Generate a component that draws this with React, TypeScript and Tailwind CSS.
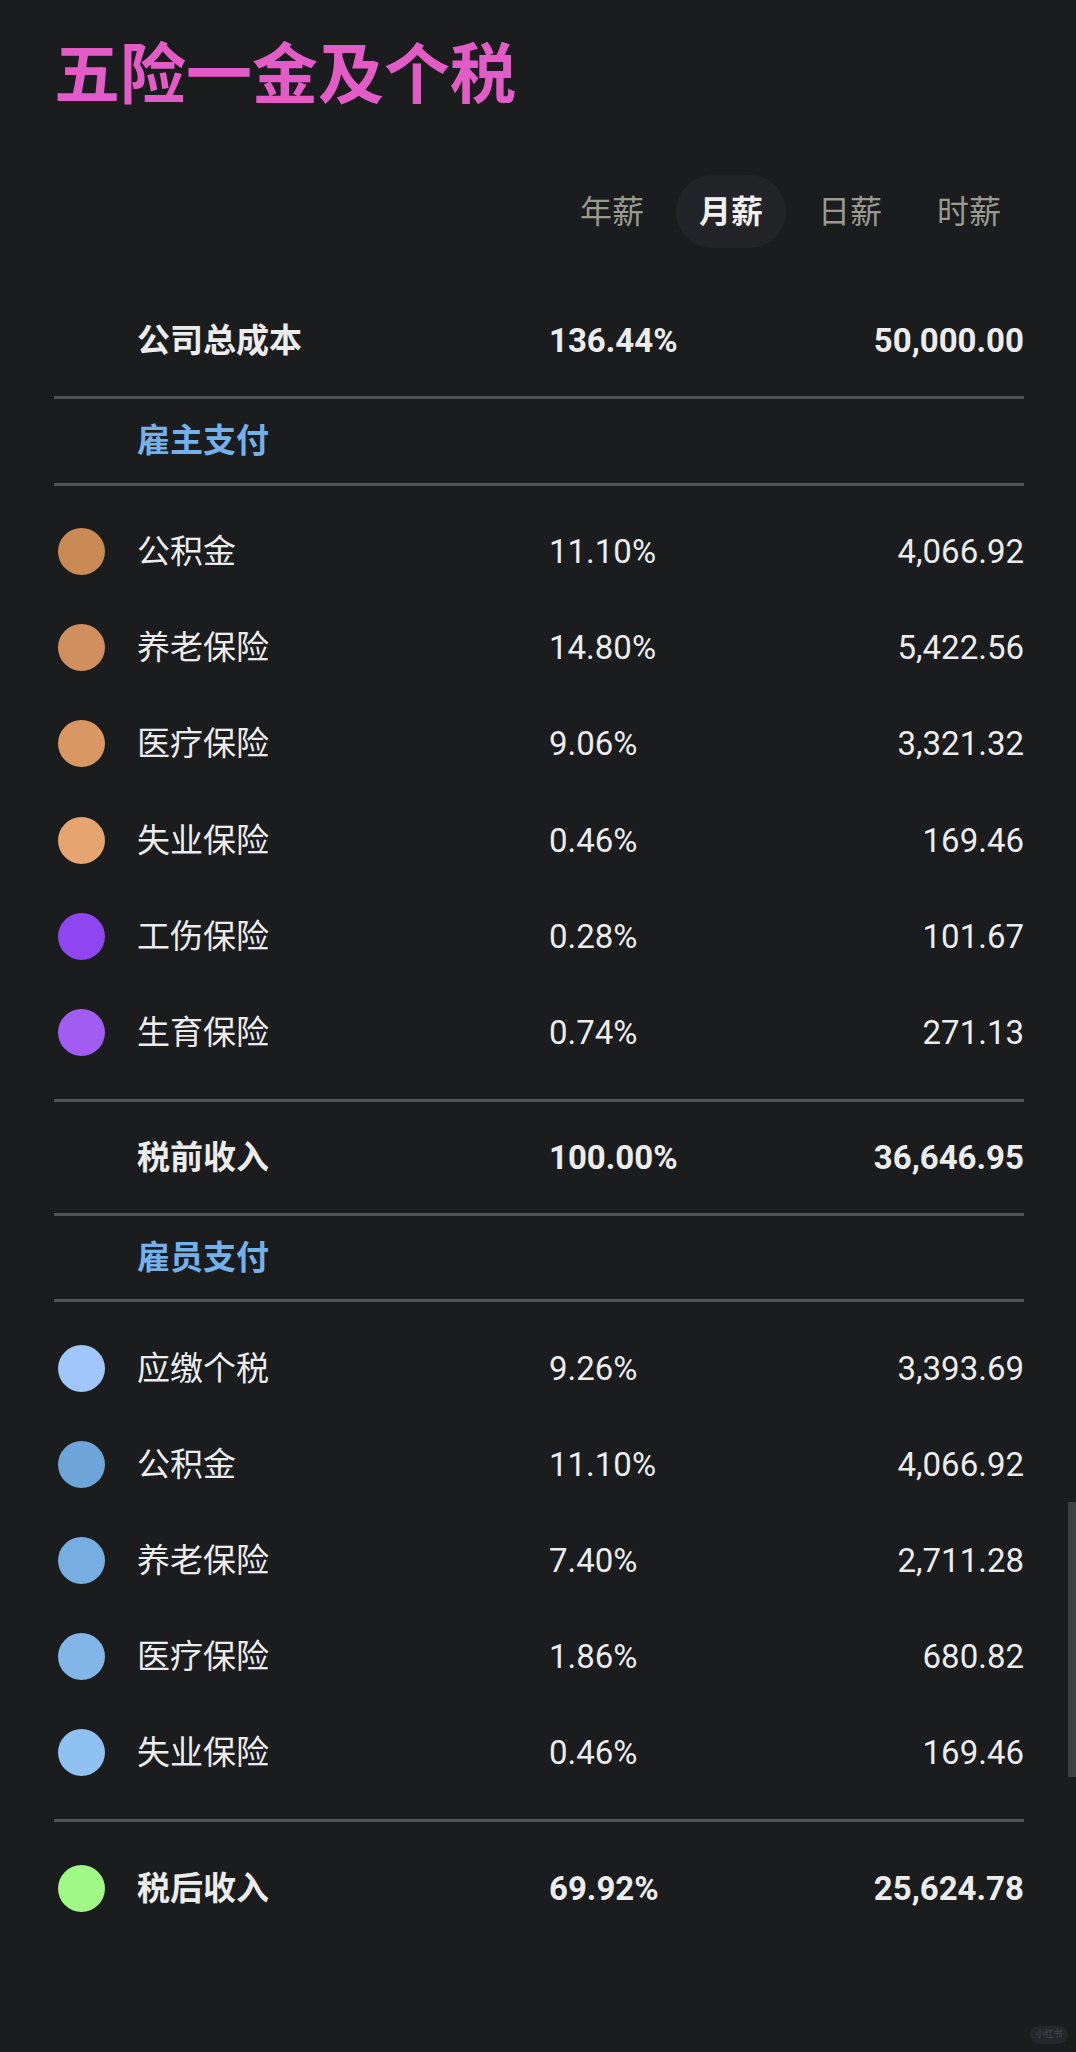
import React, { useState } from 'react';

type Item = { name: string; color: string; pct: string; amount: string };

const employer: Item[] = [
  { name: '公积金', color: 'bg-[#c98a55]', pct: '11.10%', amount: '4,066.92' },
  { name: '养老保险', color: 'bg-[#d08f5e]', pct: '14.80%', amount: '5,422.56' },
  { name: '医疗保险', color: 'bg-[#d99764]', pct: '9.06%', amount: '3,321.32' },
  { name: '失业保险', color: 'bg-[#e6a570]', pct: '0.46%', amount: '169.46' },
  { name: '工伤保险', color: 'bg-[#8f45ef]', pct: '0.28%', amount: '101.67' },
  { name: '生育保险', color: 'bg-[#a35cf2]', pct: '0.74%', amount: '271.13' },
];

const employee: Item[] = [
  { name: '应缴个税', color: 'bg-[#a0c6fb]', pct: '9.26%', amount: '3,393.69' },
  { name: '公积金', color: 'bg-[#6ea5d8]', pct: '11.10%', amount: '4,066.92' },
  { name: '养老保险', color: 'bg-[#77aee2]', pct: '7.40%', amount: '2,711.28' },
  { name: '医疗保险', color: 'bg-[#82b6e8]', pct: '1.86%', amount: '680.82' },
  { name: '失业保险', color: 'bg-[#8fc2f2]', pct: '0.46%', amount: '169.46' },
];

const tabs = ['年薪', '月薪', '日薪', '时薪'];

function Divider() {
  return <div className="h-[3px] bg-[#505356]" />;
}

function Row({ item, bold }: { item: Item; bold?: boolean }) {
  return (
    <div className="flex h-[96.2px] items-center">
      <div className="w-[83px] shrink-0">
        <div className={`ml-[4px] h-[47px] w-[47px] rounded-full ${item.color}`} />
      </div>
      <div className={`w-[412px] shrink-0 ${bold ? 'font-bold' : ''}`}>{item.name}</div>
      <div className={bold ? 'font-bold' : ''}>{item.pct}</div>
      <div className={`flex-1 text-right ${bold ? 'font-bold' : ''}`}>{item.amount}</div>
    </div>
  );
}

function SummaryRow({ name, pct, amount }: { name: string; pct: string; amount: string }) {
  return (
    <div className="flex h-[111px] items-center font-bold">
      <div className="w-[83px] shrink-0" />
      <div className="w-[412px] shrink-0">{name}</div>
      <div>{pct}</div>
      <div className="flex-1 text-right">{amount}</div>
    </div>
  );
}

function SectionHeader({ title }: { title: string }) {
  return (
    <div className="flex h-[83.5px] items-center pl-[83px] font-bold text-[#74b0ea]">{title}</div>
  );
}

export default function App() {
  const [active, setActive] = useState(1);

  return (
    <div
      className="relative min-h-[2052px] bg-[#1a1c1e] text-[#ececec]"
      style={{ fontFamily: 'Roboto, "Noto Sans CJK SC", sans-serif' }}
    >
      <div className="pl-[54px] pr-[52px]">
        <h1 className="pt-[36px] text-[66px] font-bold leading-[80px] text-[#e35bc6]">五险一金及个税</h1>

        <div className="mt-[59px] flex justify-end gap-[9px]">
          {tabs.map((t, i) => (
            <button
              key={t}
              onClick={() => setActive(i)}
              className={`h-[73px] rounded-full px-[23px] text-[32px] leading-none ${
                i === active ? 'bg-[#222427] font-bold text-[#f0f0f0]' : 'text-[#9a9a8f]'
              }`}
            >
              {t}
            </button>
          ))}
        </div>

        <div className="mt-[37px] text-[33px] leading-none">
          <SummaryRow name="公司总成本" pct="136.44%" amount="50,000.00" />
          <Divider />
          <SectionHeader title="雇主支付" />
          <Divider />
          <div className="py-[18px]">
            {employer.map((it) => (
              <Row key={it.name} item={it} />
            ))}
          </div>
          <Divider />
          <SummaryRow name="税前收入" pct="100.00%" amount="36,646.95" />
          <Divider />
          <SectionHeader title="雇员支付" />
          <Divider />
          <div className="py-[18px]">
            {employee.map((it) => (
              <Row key={it.name} item={it} />
            ))}
          </div>
          <Divider />
          <div className="py-[18px]">
            <Row
              bold
              item={{ name: '税后收入', color: 'bg-[#a0f887]', pct: '69.92%', amount: '25,624.78' }}
            />
          </div>
        </div>
      </div>

      {/* scrollbar thumb */}
      <div className="absolute right-0 top-[1502px] h-[275px] w-[8px] bg-[#3f4042]" />

      {/* watermark */}
      <div className="absolute left-[1030px] top-[2026px] flex h-[18px] w-[38px] items-center justify-center rounded-full bg-[#25272a] text-[9px] text-[#45474a]">
        小红书
      </div>
    </div>
  );
}
